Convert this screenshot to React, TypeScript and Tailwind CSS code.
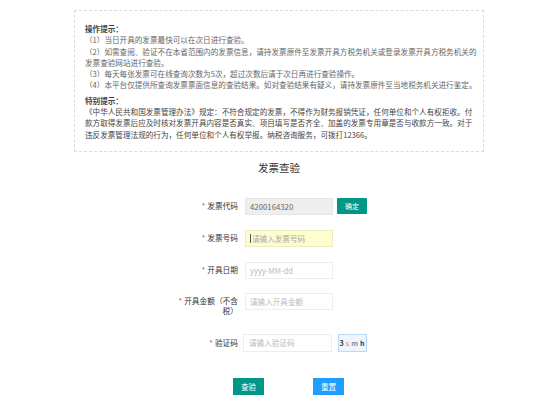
import React from "react";

const font = { fontFamily: '"Noto Sans CJK SC", "Noto Sans", sans-serif' };

function Label({ text, second }: { text: string; second?: string }) {
  return (
    <div className="w-[64px] shrink-0 text-right text-[7.7px] leading-[10px] text-[#333]">
      <div className="whitespace-nowrap">
        <span className="text-[#e53935] mr-[2px]">*</span>
        {text}
      </div>
      {second && <div className="whitespace-nowrap">{second}</div>}
    </div>
  );
}

export default function App() {
  return (
    <div className="w-[553px] h-[414px] bg-white overflow-hidden [text-spacing-trim:space-all]" style={font}>
      <div className="ml-[74px] mt-[10px] w-[410px] border border-dashed border-[#dcdcdc] pl-[10px] pr-[6px] pt-[12px] pb-[11px] text-[7.6px] leading-[11.3px] text-[#666]">
        <div className="whitespace-nowrap text-[#444] font-semibold">操作提示：</div>
        <div className="whitespace-nowrap">（1）当日开具的发票最快可以在次日进行查验。</div>
        <div className="whitespace-nowrap">（2）如需查阅、验证不在本省范围内的发票信息，请持发票原件至发票开具方税务机关或登录发票开具方税务机关的</div>
        <div className="whitespace-nowrap">发票查验网站进行查验。</div>
        <div className="whitespace-nowrap">（3）每天每张发票可在线查询次数为5次，超过次数后请于次日再进行查验操作。</div>
        <div className="whitespace-nowrap">（4）本平台仅提供所查询发票票面信息的查验结果。如对查验结果有疑义，请持发票原件至当地税务机关进行鉴定。</div>
        <div className="whitespace-nowrap mt-[4px] text-[#444] font-semibold">特别提示：</div>
        <div className="whitespace-nowrap text-[#444]">《中华人民共和国发票管理办法》规定：不符合规定的发票，不得作为财务报销凭证，任何单位和个人有权拒收。付</div>
        <div className="whitespace-nowrap text-[#444]">款方取得发票后应及时核对发票开具内容是否真实、项目填写是否齐全、加盖的发票专用章是否与收款方一致。对于</div>
        <div className="whitespace-nowrap text-[#444]">违反发票管理法规的行为，任何单位和个人有权举报。纳税咨询服务，可拨打12366。</div>
      </div>

      <div className="ml-[74px] w-[410px] mt-[9px] text-center text-[10.5px] leading-[14px] text-[#333]">
        发票查验
      </div>

      <div className="ml-[174px] mt-[23px] flex flex-col">
        <div className="flex items-center h-[17px]">
          <Label text="发票代码" />
          <div className="ml-[7px] w-[88px] h-[17px] bg-[#eeeeee] border border-[#e6e6e6] flex items-center pl-[4px] text-[7.8px] text-[#666]">
            4200164320
          </div>
          <div className="ml-[4px] w-[30px] h-[16px] bg-[#009688] text-white text-[7px] flex items-center justify-center rounded-[1px]">
            确定
          </div>
        </div>

        <div className="flex items-center h-[17px] mt-[15px]">
          <Label text="发票号码" />
          <div className="ml-[7px] w-[88px] h-[17px] bg-[#fdfdd0] border border-[#ececc0] flex items-center pl-[4px] text-[7.6px] text-[#aaa]">
            <span className="w-px h-[9px] bg-[#555] mr-[1px]"></span>
            请输入发票号码
          </div>
        </div>

        <div className="flex items-center h-[17px] mt-[15px]">
          <Label text="开具日期" />
          <div className="ml-[7px] w-[88px] h-[17px] bg-white border border-[#eeeeee] flex items-center pl-[4px] text-[7.6px] text-[#bbb]">
            yyyy-MM-dd
          </div>
        </div>

        <div className="flex items-start h-[17px] mt-[14px]">
          <div className="pt-[3px]">
            <Label text="开具金额（不含" second="税）" />
          </div>
          <div className="ml-[7px] w-[88px] h-[17px] bg-white border border-[#eeeeee] flex items-center pl-[4px] text-[7.6px] text-[#bbb]">
            请输入开具金额
          </div>
        </div>

        <div className="flex items-center h-[18px] mt-[24px]">
          <Label text="验证码" />
          <div className="ml-[5px] w-[89px] h-[18px] bg-white border border-[#eeeeee] flex items-center pl-[5px] text-[7.6px] text-[#bbb]">
            请输入验证码
          </div>
          <div className="ml-[6px] w-[29px] h-[18px] bg-[#eef6fd] border border-[#b9dbf5] flex items-center justify-center text-[7px] tracking-[1px] font-semibold">
            <span className="text-[#333]">3</span>
            <span className="text-[#e8a060] ml-[1px]">s</span>
            <span className="text-[#8a8aa8] ml-[1px]">m</span>
            <span className="text-[#2c3e70] ml-[1px]">h</span>
          </div>
        </div>

        <div className="flex mt-[26px] ml-[59px]">
          <div className="w-[31px] h-[17px] bg-[#009688] text-white text-[7.6px] flex items-center justify-center">
            查验
          </div>
          <div className="ml-[49px] w-[31px] h-[17px] bg-[#1e9fff] text-white text-[7.6px] flex items-center justify-center">
            重置
          </div>
        </div>
      </div>
    </div>
  );
}
